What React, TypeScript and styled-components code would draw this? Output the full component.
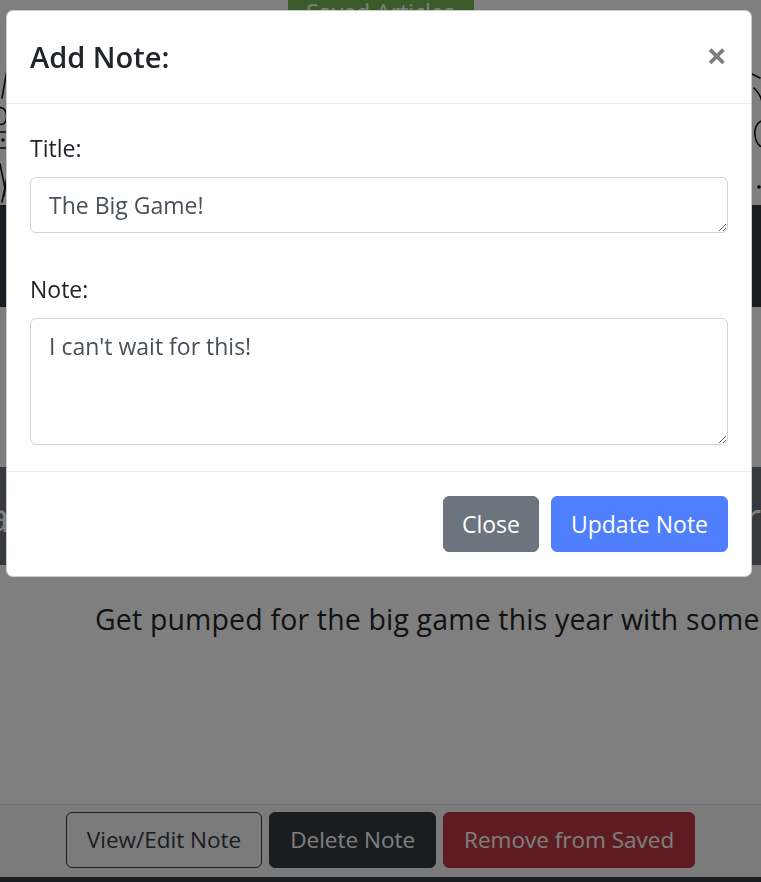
import React from "react";
import styled, { createGlobalStyle } from "styled-components";

const GlobalStyle = createGlobalStyle`
  html, body {
    margin: 0;
    padding: 0;
  }
  body {
    font-family: "Open Sans", "Noto Sans", sans-serif;
    background: #ffffff;
    color: #212529;
    width: 761px;
    height: 882px;
    overflow: hidden;
  }
  * { box-sizing: border-box; }
`;

const Page = styled.div`
  width: 761px;
  overflow: hidden;
`;

const TopNav = styled.nav`
  height: 68px;
  display: flex;
  justify-content: center;
  align-items: flex-start;
  overflow: hidden;
`;

const NavButton = styled.button`
  margin-top: -16px;
  width: 186px;
  height: 56px;
  border: 0;
  border-radius: 6px;
  background: #76b452;
  color: #ffffff;
  font-family: "Open Sans", sans-serif;
  font-size: 23px;
  line-height: 36px;
  padding: 9px 0;
`;

const SketchBanner = styled.div`
  height: 137px;
  background: #ffffff;
  svg {
    display: block;
  }
`;

const DarkBand = styled.div`
  height: 102px;
  background: #343a40;
`;

const Whitespace = styled.div`
  height: 160px;
`;

const Card = styled.section`
  display: flex;
  flex-direction: column;
`;

const CardHeader = styled.header`
  height: 98px;
  background: #6c757d;
  color: #ffffff;
  display: flex;
  align-items: center;
  justify-content: center;
  overflow: hidden;
  white-space: nowrap;
  font-size: 40px;
  font-weight: 500;
`;

const CardBody = styled.div`
  height: 239px;
  padding-top: 33px;
  overflow: hidden;
`;

const Lede = styled.p`
  margin: 0;
  padding-left: 95px;
  white-space: nowrap;
  font-size: 28.4px;
  letter-spacing: 0.2px;
  line-height: 1.5;
  color: #212529;
`;

const CardFooter = styled.footer`
  height: 73px;
  border-top: 1px solid rgba(0, 0, 0, 0.125);
  background: rgba(0, 0, 0, 0.03);
  display: flex;
  justify-content: center;
  align-items: flex-start;
  gap: 7px;
  padding-top: 7px;
`;

const PageButton = styled.button<{ $variant: "outline" | "dark" | "danger" }>`
  height: 56px;
  padding: 0 20px;
  border-radius: 6px;
  font-family: "Open Sans", sans-serif;
  font-size: 22.5px;
  line-height: 36px;
  border: 1.5px solid
    ${(p) => (p.$variant === "danger" ? "#bb3944" : "#343a40")};
  background: ${(p) =>
    p.$variant === "outline"
      ? "transparent"
      : p.$variant === "dark"
      ? "#343a40"
      : "#bb3944"};
  color: ${(p) => (p.$variant === "outline" ? "#343a40" : "#ffffff")};
`;

const BottomBar = styled.div`
  height: 10px;
  background: #343a40;
`;

const Backdrop = styled.div`
  position: fixed;
  inset: 0;
  background: rgba(0, 0, 0, 0.5);
`;

const ModalDialog = styled.div`
  position: fixed;
  top: 10px;
  left: 6px;
  width: 746px;
`;

const ModalContent = styled.div`
  background: #ffffff;
  border: 1px solid rgba(0, 0, 0, 0.2);
  border-radius: 7px;
  display: flex;
  flex-direction: column;
`;

const ModalHeader = styled.div`
  height: 93px;
  border-bottom: 1px solid #e9ecef;
  display: flex;
  align-items: center;
  justify-content: space-between;
  padding: 0 23px;
`;

const ModalTitle = styled.h5`
  margin: 0;
  font-size: 29px;
  font-weight: 600;
  line-height: 36px;
  color: #212529;
`;

const CloseX = styled.button`
  background: transparent;
  border: 0;
  padding: 0 1px 2px 0;
  font-family: "Open Sans", sans-serif;
  font-size: 36px;
  font-weight: 700;
  line-height: 1;
  color: #000000;
  opacity: 0.5;
`;

const ModalBody = styled.div`
  padding: 26px 23px;
`;

const FieldGroup = styled.div<{ $last?: boolean }>`
  margin-bottom: ${(p) => (p.$last ? "0" : "38px")};
`;

const FieldLabel = styled.label`
  display: block;
  font-size: 23px;
  line-height: 36px;
  margin-bottom: 11px;
  color: #212529;
`;

const TextField = styled.textarea<{ $h: number }>`
  display: block;
  width: 100%;
  height: ${(p) => p.$h}px;
  padding: 9px 18px;
  border: 1px solid #ced4da;
  border-radius: 6px;
  font-family: "Open Sans", sans-serif;
  font-size: 23px;
  line-height: 36px;
  color: #495057;
  background: #ffffff;
  resize: vertical;
  overflow: hidden;
  outline: none;
`;

const ModalFooter = styled.div`
  border-top: 1px solid #e9ecef;
  padding: 24px 23px;
  display: flex;
  justify-content: flex-end;
  gap: 12px;
`;

const ModalButton = styled.button<{ $primary?: boolean }>`
  height: 56px;
  padding: 0 ${(p) => (p.$primary ? "19px" : "18px")};
  border: 1px solid ${(p) => (p.$primary ? "#4f7ffd" : "#6c757d")};
  border-radius: 6px;
  background: ${(p) => (p.$primary ? "#4f7ffd" : "#6c757d")};
  color: #ffffff;
  font-family: "Open Sans", sans-serif;
  font-size: 23px;
  line-height: 36px;
`;

function Sketch() {
  return (
    <svg width="761" height="137" viewBox="0 0 761 137">
      <g fill="none" stroke="#111" strokeWidth="1.6" strokeLinecap="round">
        <path d="M7 2 L2 30" />
        <path d="M-2 40 C4 38 8 44 6 52 C4 58 -2 58 -3 52" />
        <path d="M-2 64 L7 64 L7 80 L-2 80" />
        <path d="M0 96 L5 120 L2 134" />
        <path d="M8 100 L4 128" />
        <path d="M754 20 C760 26 764 34 762 44" />
        <path d="M764 52 C756 54 753 62 756 72 C758 78 762 80 765 78" />
        <path d="M748 4 L760 10" />
      </g>
      <circle cx="3" cy="72" r="1.8" fill="#111" />
      <circle cx="759" cy="119" r="1.8" fill="#111" />
    </svg>
  );
}

export default function App() {
  return (
    <>
      <GlobalStyle />
      <Page>
        <TopNav>
          <NavButton>Saved Articles</NavButton>
        </TopNav>
        <SketchBanner>
          <Sketch />
        </SketchBanner>
        <DarkBand />
        <Whitespace />
        <Card>
          <CardHeader>Big Game Recipes: Three Super Bowl Appetizer Ideas</CardHeader>
          <CardBody>
            <Lede>
              Get pumped for the big game this year with some
              {"\u00a0\u00a0"}delicious game day recipes.
            </Lede>
          </CardBody>
          <CardFooter>
            <PageButton $variant="outline">View/Edit Note</PageButton>
            <PageButton $variant="dark">Delete Note</PageButton>
            <PageButton $variant="danger">Remove from Saved</PageButton>
          </CardFooter>
        </Card>
        <BottomBar />
      </Page>
      <Backdrop />
      <ModalDialog role="dialog">
        <ModalContent>
          <ModalHeader>
            <ModalTitle>Add Note:</ModalTitle>
            <CloseX aria-label="Close">×</CloseX>
          </ModalHeader>
          <ModalBody>
            <FieldGroup>
              <FieldLabel>Title:</FieldLabel>
              <TextField $h={56} rows={1} defaultValue="The Big Game!" />
            </FieldGroup>
            <FieldGroup $last>
              <FieldLabel>Note:</FieldLabel>
              <TextField $h={127} rows={3} defaultValue="I can't wait for this!" />
            </FieldGroup>
          </ModalBody>
          <ModalFooter>
            <ModalButton>Close</ModalButton>
            <ModalButton $primary>Update Note</ModalButton>
          </ModalFooter>
        </ModalContent>
      </ModalDialog>
    </>
  );
}
